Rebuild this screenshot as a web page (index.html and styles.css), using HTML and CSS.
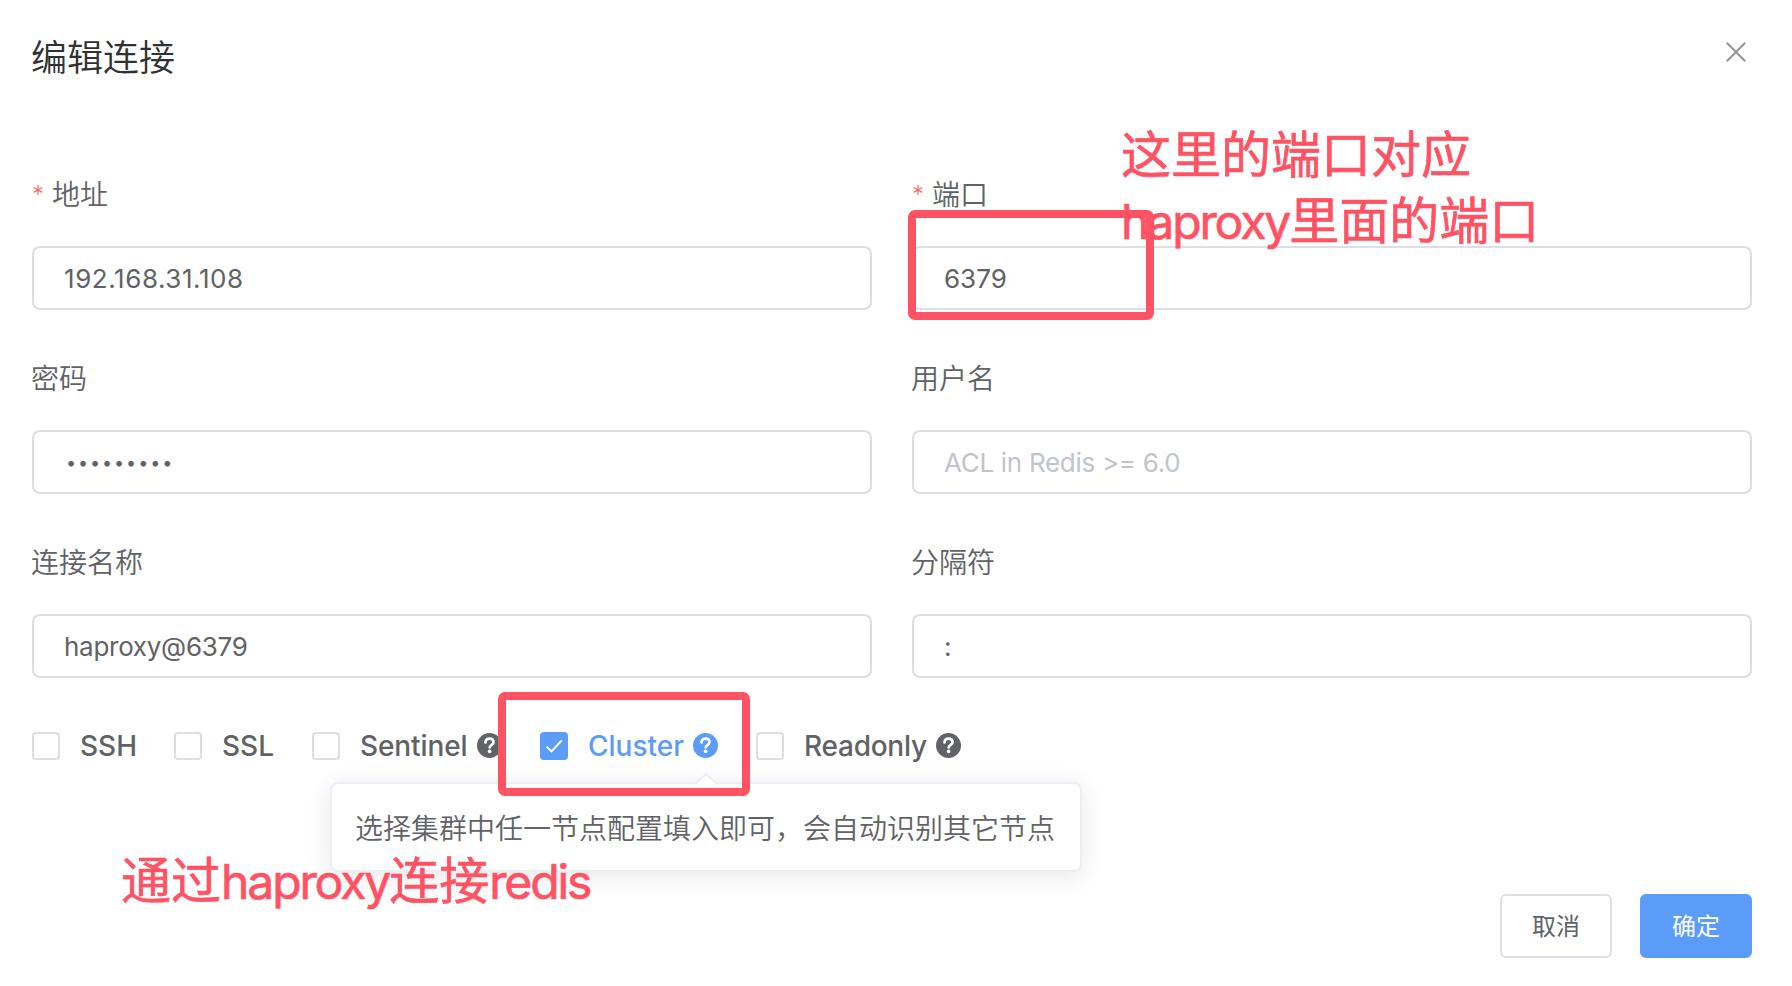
FILE: index.html
```html
<!DOCTYPE html>
<html lang="zh-CN">
<head>
<meta charset="utf-8">
<title>编辑连接</title>
<link rel="stylesheet" href="styles.css">
</head>
<body>
<svg class="defs" width="0" height="0">
  <symbol id="question" viewBox="0 0 25 25">
    <circle cx="12.5" cy="12.5" r="12.5" fill="currentColor"/>
    <path d="M8.5 9.4C8.5 7 10.2 5.6 12.5 5.6s4 1.4 4 3.6c0 2.8-3.8 2.9-3.8 5.2" fill="none" stroke="#fff" stroke-width="2.7" stroke-linecap="round"/>
    <circle cx="12.6" cy="18.4" r="1.8" fill="#fff"/>
  </symbol>
</svg>
<main class="dialog">
  <header class="header">
    <h1 class="title">编辑连接</h1>
    <svg class="close" viewBox="0 0 20 20"><path d="M.8.8l18.4 18.4M19.2.8L.8 19.2"/></svg>
  </header>
  <form class="form">
    <div class="field"><label class="label"><span class="star">*</span>地址</label><div class="input"><span class="ip">192.168.31.108</span></div></div>
    <div class="field"><label class="label"><span class="star">*</span>端口</label><div class="input"><span class="port">6379</span></div></div>
    <div class="field"><label class="label">密码</label><div class="input"><span class="password">•••••••••</span></div></div>
    <div class="field"><label class="label">用户名</label><div class="input"><span class="placeholder">ACL in Redis &gt;= 6.0</span></div></div>
    <div class="field"><label class="label">连接名称</label><div class="input"><span class="name">haproxy@6379</span></div></div>
    <div class="field"><label class="label">分隔符</label><div class="input"><span>:</span></div></div>
  </form>
  <div class="options">
    <label class="option ssh"><span class="box"></span><span class="text">SSH</span></label>
    <label class="option ssl"><span class="box"></span><span class="text">SSL</span></label>
    <label class="option sentinel"><span class="box"></span><span class="text">Sentinel</span><svg class="help"><use href="#question"/></svg></label>
    <label class="option cluster"><span class="box checked"><svg class="tick" viewBox="0 0 28 28"><path d="M6.5 14.6l5 4.8L21.7 8.5"/></svg></span><span class="text">Cluster</span><svg class="help"><use href="#question"/></svg></label>
    <label class="option readonly"><span class="box"></span><span class="text">Readonly</span><svg class="help"><use href="#question"/></svg></label>
  </div>
  <footer class="footer">
    <button class="button" type="button">取消</button>
    <button class="button primary" type="button">确定</button>
  </footer>
</main>
<div class="tooltip">选择集群中任一节点配置填入即可，会自动识别其它节点<svg class="arrow" viewBox="0 0 24 13"><path class="arrow-fill" d="M0 13L12 1l12 12z"/><path class="arrow-line" d="M1 11L12 1l11 10"/></svg></div>
<div class="mark mark-port"></div>
<div class="mark mark-cluster"></div>
<div class="note note-port">这里的端口对应<br><span class="latin">haproxy</span>里面的端口</div>
<div class="note note-cluster">通过<span class="latin">haproxy</span>连接<span class="latin">redis</span></div>
</body>
</html>
```
FILE: styles.css
```css
* { box-sizing: border-box; }
body {
  margin: 0;
  width: 1792px;
  height: 986px;
  overflow: hidden;
  background: #fff;
  color: #606266;
  font-family: Inter, "Noto Sans CJK SC", sans-serif;
  font-size: 28px;
}
.defs { position: absolute; }
.dialog {
  height: 986px;
  padding: 28px 40px 28px 32px;
  display: flex;
  flex-direction: column;
}
.header { height: 126px; display: flex; justify-content: space-between; align-items: flex-start; }
.title { margin: 0; font-size: 36px; line-height: 60px; font-weight: 350; text-indent: -1px; color: #303133; }
.close { width: 20px; height: 20px; margin: 14px 6px 0 0; fill: none; stroke: #909399; stroke-width: 2; }
.form { display: grid; grid-template-columns: 840px 840px; column-gap: 40px; row-gap: 28px; }
.field { height: 156px; }
.label { display: flex; height: 92px; line-height: 82px; font-weight: 350; text-indent: -1px; }
.star { width: 21px; padding-left: 1px; color: #f56c6c; font-size: 24px; line-height: 82px; }
.input {
  height: 64px;
  border: 2px solid #dcdfe6;
  border-radius: 8px;
  padding: 0 30px;
  font-size: 26px;
  line-height: 61px;
  white-space: nowrap;
}
.ip { letter-spacing: .57px; }
.name { letter-spacing: -.28px; }
.password { display: block; font-size: 18px; letter-spacing: 1.9px; padding-left: 2px; }
.placeholder { color: #c0c4cc; letter-spacing: -.3px; }
.options { display: flex; height: 28px; margin-top: 54px; }
.option { display: flex; align-items: center; flex: none; height: 28px; font-weight: 500; line-height: 28px; }
.box { flex: none; width: 28px; height: 28px; border: 2px solid #dcdfe6; border-radius: 4px; margin-right: 20px; }
.checked { background: #5b9cf8; border: 0; }
.tick { display: block; width: 28px; height: 28px; fill: none; stroke: #fff; stroke-width: 2; }
.ssh { width: 142px; }
.ssl { width: 138px; }
.sentinel { width: 228px; }
.sentinel .text { letter-spacing: -.1px; }
.cluster { width: 216px; color: #5b9cf8; }
.readonly .text { letter-spacing: -.25px; }
.help { width: 25px; height: 25px; margin: -2px 0 0 9px; flex: none; }
.footer { margin-top: auto; display: flex; justify-content: flex-end; gap: 28px; }
.button {
  width: 112px;
  height: 64px;
  padding: 0 0 3px;
  border: 2px solid #dcdfe6;
  border-radius: 6px;
  background: #fff;
  color: #606266;
  font: 400 24px Inter, "Noto Sans CJK SC", sans-serif;
}
.primary { background: #5b9cf8; border-color: #5b9cf8; color: #fff; }
.tooltip {
  position: absolute;
  left: 330px;
  top: 782px;
  width: 752px;
  height: 90px;
  padding-left: 23px;
  border: 2px solid #ebeef5;
  border-radius: 8px;
  background: #fff;
  box-shadow: 0 4px 24px rgba(0, 0, 0, .1);
  font-weight: 350;
  line-height: 90px;
  white-space: nowrap;
}
.arrow { position: absolute; left: 362px; top: -11px; width: 24px; height: 13px; }
.arrow-fill { fill: #fff; }
.arrow-line { fill: none; stroke: #ebeef5; stroke-width: 2; }
.mark { position: absolute; border: 8px solid #ff5364; border-radius: 7px; }
.mark-port { left: 908px; top: 210px; width: 246px; height: 110px; }
.mark-cluster { left: 498px; top: 692px; width: 252px; height: 104px; }
.note {
  position: absolute;
  color: #ff5364;
  font-size: 50px;
  line-height: 66px;
  white-space: nowrap;
  -webkit-text-stroke: .7px #ff5364;
}
.note-port { left: 1121px; top: 122px; }
.note-cluster { left: 121px; top: 848px; }
.latin { font-size: 48px; letter-spacing: -2.1px; }
```
